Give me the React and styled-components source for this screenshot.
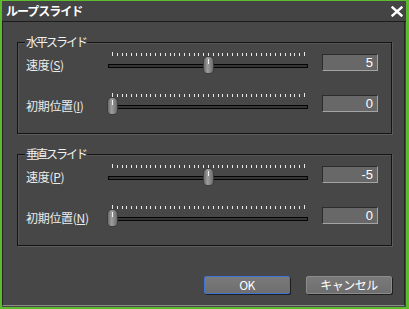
import styled, { createGlobalStyle } from "styled-components";

const GlobalStyle = createGlobalStyle`
  html, body { margin: 0; padding: 0; background: #474747; }
  body { font-family: "Noto Sans CJK JP", "Liberation Sans", sans-serif; }
`;

const groups = [
  {
    title: "水平スライド",
    rows: [
      { label: "速度", key: "S", value: 5, min: 0, max: 10 },
      { label: "初期位置", key: "I", value: 0, min: 0, max: 100 },
    ],
  },
  {
    title: "垂直スライド",
    rows: [
      { label: "速度", key: "P", value: -5, min: -10, max: 0 },
      { label: "初期位置", key: "N", value: 0, min: 0, max: 100 },
    ],
  },
];

const TICKS = 41;

const Slider = ({ value, min, max }) => {
  const frac = (value - min) / (max - min);
  const left = 4 + frac * 192 - 5.5;
  return (
    <SliderBox>
      <Ticks width="200" height="4" viewBox="0 0 200 4">
        {Array.from({ length: TICKS }).map((_, i) => {
          const x = Math.round(4 + i * 4.8) + 0.5;
          const end = i === 0 || i === TICKS - 1;
          return <line key={i} x1={x} x2={x} y1={end ? 0 : 1} y2={4} stroke="#e8e8e8" strokeWidth="1" />;
        })}
      </Ticks>
      <Track />
      <Thumb style={{ left: Math.round(left) }} />
    </SliderBox>
  );
};

const App = () => {
  return (
    <>
      <GlobalStyle />
      <Window>
        <TitleBar>
          <Title>ループスライド</Title>
          <svg width="12" height="11" viewBox="0 0 12 11">
            <path d="M1.5 1.5 L10.5 9.5 M10.5 1.5 L1.5 9.5" stroke="#fff" strokeWidth="2.4" strokeLinecap="square" />
          </svg>
        </TitleBar>
        <Body>
          {groups.map((g) => (
            <Group key={g.title}>
              <Legend>{g.title}</Legend>
              {g.rows.map((r) => (
                <Row key={r.key}>
                  <Label>
                    {r.label}(<u>{r.key}</u>)
                  </Label>
                  <Slider value={r.value} min={r.min} max={r.max} />
                  <ValueBox>{r.value}</ValueBox>
                </Row>
              ))}
            </Group>
          ))}
          <Buttons>
            <Button $focused>OK</Button>
            <Button>キャンセル</Button>
          </Buttons>
        </Body>
      </Window>
    </>
  );
};

const Window = styled.div`
  width: 409px;
  height: 309px;
  box-sizing: border-box;
  border: 2px solid #5cbc2c;
  border-top-width: 1px;
  border-right-width: 3px;
  background: #474747;
  display: flex;
  flex-direction: column;
`;

const TitleBar = styled.div`
  height: 20px;
  flex: none;
  display: flex;
  align-items: center;
  justify-content: space-between;
  padding: 0 3px 0 4px;
  background: #444444;
  border-bottom: 1px solid #1c1c1c;
`;

const Title = styled.div`
  color: #ffffff;
  font-size: 12px;
  font-weight: 700;
  letter-spacing: -1px;
  line-height: 16px;
`;

const Body = styled.div`
  flex: 1;
  display: flex;
  flex-direction: column;
  padding: 20px 0 0 14px;
  border-left: 1px solid #252525;
  border-right: 1px solid #252525;
  border-bottom: 1px solid #8c8c8c;
  margin: 0 1px 1px 0;
`;

const Group = styled.div`
  position: relative;
  width: 375px;
  box-sizing: border-box;
  border: 1px solid #141414;
  box-shadow: 1px 1px 0 #5c5c5c, inset 1px 1px 0 #545454;
  padding: 9px 0 16px 8px;
  display: flex;
  flex-direction: column;
  gap: 17px;
  & + & {
    margin-top: 20px;
  }
`;

const Legend = styled.div`
  position: absolute;
  left: 7px;
  top: -9px;
  padding: 0 1px;
  background: #474747;
  color: #f0f0f0;
  font-size: 12px;
  line-height: 16px;
  letter-spacing: -2px;
`;

const Row = styled.div`
  display: flex;
  align-items: flex-start;
`;

const Label = styled.div`
  width: 82px;
  flex: none;
  margin-top: 5px;
  color: #ececec;
  font-size: 12px;
  line-height: 16px;
  letter-spacing: -0.3px;
  u { text-underline-offset: 1px; }
`;

const SliderBox = styled.div`
  position: relative;
  width: 200px;
  height: 24px;
  flex: none;
  display: flex;
  flex-direction: column;
`;

const Ticks = styled.svg`
  display: block;
`;

const Track = styled.div`
  margin-top: 8px;
  height: 4px;
  box-sizing: border-box;
  border: 1px solid #050505;
  background: #363636;
`;

const Thumb = styled.div`
  position: absolute;
  top: 4px;
  width: 11px;
  height: 18px;
  box-sizing: border-box;
  border: 1px solid #3c3c3c;
  border-radius: 5px 5px 4px 4px;
  background: linear-gradient(90deg, #6c6c6c 0%, #9c9c9c 40%, #8a8a8a 65%, #6a6a6a 100%);
  &::after {
    content: "";
    position: absolute;
    left: 4px;
    top: 2px;
    width: 1px;
    height: 5px;
    background: #f4f4f4;
  }
`;

const ValueBox = styled.div`
  margin: 2px 0 0 14px;
  width: 56px;
  height: 17px;
  box-sizing: border-box;
  background: #686868;
  border-top: 1px solid #2c2c2c;
  border-left: 1px solid #2c2c2c;
  border-bottom: 1px solid #a4a4a4;
  border-right: 1px solid #a4a4a4;
  color: #ffffff;
  font-family: "Liberation Sans", sans-serif;
  font-size: 13px;
  line-height: 15px;
  text-align: right;
  padding-right: 4px;
`;

const Buttons = styled.div`
  width: 375px;
  margin-top: 30px;
  display: flex;
  justify-content: flex-end;
  gap: 16px;
`;

const Button = styled.button`
  width: 86px;
  height: 18px;
  box-sizing: border-box;
  padding: 0;
  border-radius: 2px;
  background: linear-gradient(#7a7a7a, #6e6e6e);
  border: 1px solid ${(p) => (p.$focused ? "#3e74d4" : "#8c8c8c")};
  box-shadow: 1px 1px 0 #1e1e1e;
  color: #ffffff;
  font-family: "Noto Sans CJK JP", "Liberation Sans", sans-serif;
  font-size: 12px;
  line-height: 16px;
  letter-spacing: -0.5px;
`;

export default App;
